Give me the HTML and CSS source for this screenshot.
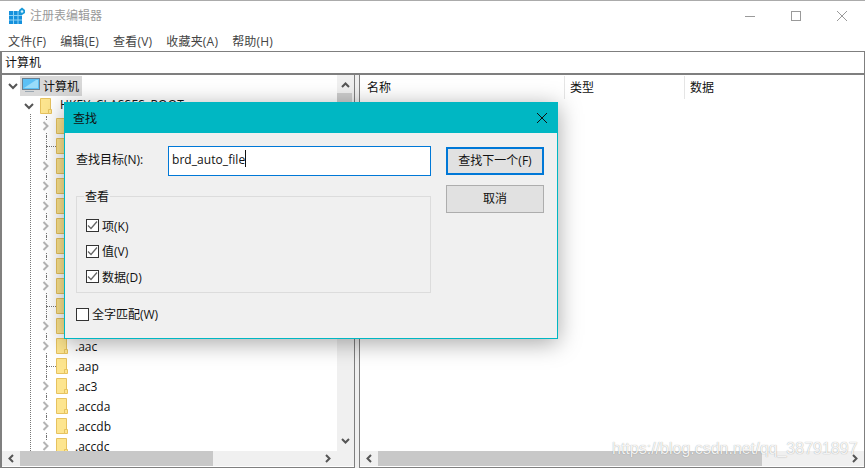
FILE: index.html
```html
<!DOCTYPE html>
<html>
<head>
    <meta charset="utf-8">
    <title>注册表编辑器</title>
    <link rel="stylesheet" href="styles.css">
</head>

<body>
    <svg class="defs" width="0" height="0">
        <symbol id="folder" viewBox="0 0 12 16">
            <path d="M0.500 0.500h10v15h-10z" fill="#fde58f" stroke="#e6c25f"/>
            <path d="M8.500 15.500v-4h3v4z" fill="#fde58f" stroke="#e6c25f"/>
        </symbol>
        <symbol id="chevRight" viewBox="0 0 12 12">
            <rect width="12" height="12" fill="#fff"/>
            <path d="M3.500 2l4 4-4 4" fill="none" stroke="#b4b4b4" stroke-width="2"/>
        </symbol>
        <symbol id="chevDown" viewBox="0 0 12 12">
            <rect width="12" height="12" fill="#fff"/>
            <path d="M2 4l4 4 4-4" fill="none" stroke="#555" stroke-width="2"/>
        </symbol>
        <symbol id="tick" viewBox="0 0 11 11">
            <path d="M1 5.500l3 3 6-7" fill="none" stroke="#666" stroke-width="1.300"/>
        </symbol>
    </svg>

    <div class="window">
        <div class="titlebar">
            <svg class="appIcon" width="18" height="18" viewBox="0 0 18 18">
                <rect x="1" y="4" width="13" height="13" fill="#1590dc"/>
                <path d="M5.500 4v13M10 4v13M1 8.500h13M1 13h13" stroke="#8fd3f5" stroke-width="1"/>
                <path d="M14 0.500l3 2.500v3l-3 2-3-2v-3z" fill="#1a9ad9"/>
                <circle cx="14" cy="4.500" r="1.300" fill="#d8f1fc"/>
            </svg>
            <span class="titleText">注册表编辑器</span>
            <div class="winButtons">
                <svg width="12" height="12" viewBox="0 0 12 12"><path d="M1 6.500h10" stroke="#9a9a9a"/></svg>
                <svg width="12" height="12" viewBox="0 0 12 12"><rect x="1.500" y="1.500" width="9" height="9" fill="none" stroke="#9a9a9a"/></svg>
                <svg width="12" height="12" viewBox="0 0 12 12"><path d="M1 1l10 10M11 1L1 11" stroke="#9a9a9a"/></svg>
            </div>
        </div>

        <div class="menubar">
            <span>文件(F)</span>
            <span>编辑(E)</span>
            <span>查看(V)</span>
            <span>收藏夹(A)</span>
            <span>帮助(H)</span>
        </div>

        <div class="address">计算机</div>

        <div class="panes">
            <div class="pane treePane">
                <div class="paneBody">
                    <div class="tree">
                        <div class="treeLine"></div>
                        <div class="row computerRow">
                            <svg class="chev" width="12" height="12"><use href="#chevDown"/></svg>
                            <span class="computerSel">
                                <svg width="18" height="16" viewBox="0 0 18 16">
                                    <rect x="0.500" y="0.500" width="17" height="11" fill="#5cc0f5" stroke="#6b7f90"/>
                                    <path d="M2 10L14 2h2v8z" fill="#9adcfa"/>
                                    <path d="M6 13h6v1H3v-1z" fill="#9aa7b2"/>
                                </svg>
                                计算机
                            </span>
                        </div>
                        <div class="row hiveRow">
                            <svg class="chev" width="12" height="12"><use href="#chevDown"/></svg>
                            <svg class="folder" width="12" height="16"><use href="#folder"/></svg>
                            <span class="hiveName">HKEY_CLASSES_ROOT</span>
                        </div>
                        <div class="row keyRow"><svg class="chev" width="12" height="12"><use href="#chevRight"/></svg><svg class="folder" width="12" height="16"><use href="#folder"/></svg></div>
                        <div class="row keyRow"><span class="dots"></span><svg class="folder" width="12" height="16"><use href="#folder"/></svg></div>
                        <div class="row keyRow"><svg class="chev" width="12" height="12"><use href="#chevRight"/></svg><svg class="folder" width="12" height="16"><use href="#folder"/></svg></div>
                        <div class="row keyRow"><svg class="chev" width="12" height="12"><use href="#chevRight"/></svg><svg class="folder" width="12" height="16"><use href="#folder"/></svg></div>
                        <div class="row keyRow"><svg class="chev" width="12" height="12"><use href="#chevRight"/></svg><svg class="folder" width="12" height="16"><use href="#folder"/></svg></div>
                        <div class="row keyRow"><svg class="chev" width="12" height="12"><use href="#chevRight"/></svg><svg class="folder" width="12" height="16"><use href="#folder"/></svg></div>
                        <div class="row keyRow"><svg class="chev" width="12" height="12"><use href="#chevRight"/></svg><svg class="folder" width="12" height="16"><use href="#folder"/></svg></div>
                        <div class="row keyRow"><svg class="chev" width="12" height="12"><use href="#chevRight"/></svg><svg class="folder" width="12" height="16"><use href="#folder"/></svg></div>
                        <div class="row keyRow"><svg class="chev" width="12" height="12"><use href="#chevRight"/></svg><svg class="folder" width="12" height="16"><use href="#folder"/></svg></div>
                        <div class="row keyRow"><span class="dots"></span><svg class="folder" width="12" height="16"><use href="#folder"/></svg></div>
                        <div class="row keyRow"><svg class="chev" width="12" height="12"><use href="#chevRight"/></svg><svg class="folder" width="12" height="16"><use href="#folder"/></svg></div>
                        <div class="row keyRow"><svg class="chev" width="12" height="12"><use href="#chevRight"/></svg><svg class="folder" width="12" height="16"><use href="#folder"/></svg><span>.aac</span></div>
                        <div class="row keyRow"><span class="dots"></span><svg class="folder" width="12" height="16"><use href="#folder"/></svg><span>.aap</span></div>
                        <div class="row keyRow"><svg class="chev" width="12" height="12"><use href="#chevRight"/></svg><svg class="folder" width="12" height="16"><use href="#folder"/></svg><span>.ac3</span></div>
                        <div class="row keyRow"><svg class="chev" width="12" height="12"><use href="#chevRight"/></svg><svg class="folder" width="12" height="16"><use href="#folder"/></svg><span>.accda</span></div>
                        <div class="row keyRow"><svg class="chev" width="12" height="12"><use href="#chevRight"/></svg><svg class="folder" width="12" height="16"><use href="#folder"/></svg><span>.accdb</span></div>
                        <div class="row keyRow"><svg class="chev" width="12" height="12"><use href="#chevRight"/></svg><svg class="folder" width="12" height="16"><use href="#folder"/></svg><span>.accdc</span></div>
                    </div>
                    <div class="vScroll">
                        <svg width="9" height="6" viewBox="0 0 9 6"><path d="M1 5l3.500-3.500L8 5" fill="none" stroke="#555" stroke-width="2"/></svg>
                        <div class="vThumb"></div>
                        <svg width="9" height="6" viewBox="0 0 9 6"><path d="M1 1l3.500 3.500L8 1" fill="none" stroke="#555" stroke-width="2"/></svg>
                    </div>
                </div>
                <div class="hScroll treeScroll">
                    <svg width="6" height="9" viewBox="0 0 6 9"><path d="M5 1L1.500 4.500 5 8" fill="none" stroke="#555" stroke-width="2"/></svg>
                    <div class="hThumb treeThumb"></div>
                    <svg width="6" height="9" viewBox="0 0 6 9"><path d="M1 1l3.500 3.500L1 8" fill="none" stroke="#555" stroke-width="2"/></svg>
                </div>
            </div>

            <div class="pane listPane">
                <div class="listHead">
                    <span class="colName">名称</span>
                    <span class="colType">类型</span>
                    <span class="colData">数据</span>
                </div>
                <div class="listBody"></div>
                <div class="hScroll listScroll">
                    <svg width="6" height="9" viewBox="0 0 6 9"><path d="M5 1L1.500 4.500 5 8" fill="none" stroke="#555" stroke-width="2"/></svg>
                    <div class="hThumb listThumb"></div>
                    <svg width="6" height="9" viewBox="0 0 6 9"><path d="M1 1l3.500 3.500L1 8" fill="none" stroke="#555" stroke-width="2"/></svg>
                </div>
            </div>
        </div>
    </div>

    <div class="dialog">
        <div class="dlgTitle">
            <span>查找</span>
            <svg width="12" height="12" viewBox="0 0 12 12"><path d="M1 1l10 10M11 1L1 11" stroke="#111"/></svg>
        </div>
        <div class="dlgBody">
            <div class="dlgMain">
                <div class="findRow">
                    <label>查找目标(N):</label>
                    <div class="findInput"><span class="findText">brd_auto_file</span><span class="caret"></span></div>
                </div>
                <fieldset class="lookIn">
                    <legend>查看</legend>
                    <div class="check"><span class="box"><svg width="11" height="11"><use href="#tick"/></svg></span>项(K)</div>
                    <div class="check"><span class="box"><svg width="11" height="11"><use href="#tick"/></svg></span>值(V)</div>
                    <div class="check"><span class="box"><svg width="11" height="11"><use href="#tick"/></svg></span>数据(D)</div>
                </fieldset>
                <div class="check wholeWord"><span class="box"></span>全字匹配(W)</div>
            </div>
            <div class="dlgButtons">
                <button class="btn primary">查找下一个(F)</button>
                <button class="btn">取消</button>
            </div>
        </div>
    </div>

    <div class="watermark">https://blog.csdn.net/qq_38791897</div>
</body>
</html>
```

FILE: styles.css
```css
* {
    box-sizing: border-box;
}

html, body {
    margin: 0;
    height: 100%;
    overflow: hidden;
}

body {
    background: #fff;
    font-family: "Open Sans", "Noto Sans CJK SC", sans-serif;
    font-size: 12px;
    color: #111;
}

.defs {
    position: absolute;
}

.window {
    height: 468px;
    display: flex;
    flex-direction: column;
    border-top: 1px solid #ababab;
}

.titlebar {
    height: 29px;
    display: flex;
    align-items: center;
    padding-left: 8px;
}

.appIcon {
    margin-right: 4px;
}

.titleText {
    color: #9a9a9a;
    margin-bottom: 2px;
}

.winButtons {
    margin-left: auto;
    display: flex;
    gap: 34px;
    padding-right: 17px;
}

.menubar {
    height: 21px;
    display: flex;
    align-items: center;
    gap: 14px;
    padding-left: 8px;
    color: #444;
    letter-spacing: 0.2px;
}

.address {
    height: 24px;
    border: solid #7f7f7f;
    border-width: 1px 1px 2px 2px;
    padding-left: 3px;
    line-height: 22px;
    background: #fff;
}

.panes {
    flex: 1;
    display: flex;
    gap: 4px;
    min-height: 0;
    background: #f0f0f0;
}

.pane {
    background: #fff;
    display: flex;
    flex-direction: column;
    border: solid #7f7f7f;
    border-width: 0 1px 1px 1px;
}

.treePane {
    width: 355px;
    border-left-width: 2px;
}

.listPane {
    flex: 1;
}

.paneBody {
    flex: 1;
    min-height: 0;
    display: flex;
}

.tree {
    flex: 1;
    min-width: 0;
    overflow: hidden;
    padding-top: 1px;
    position: relative;
}

.treeLine {
    position: absolute;
    left: 28px;
    top: 39px;
    bottom: 0;
    border-left: 1px dotted #777;
}

.row {
    height: 20px;
    display: flex;
    align-items: center;
    white-space: nowrap;
    position: relative;
}

.chev {
    position: relative;
    flex: none;
}

.computerRow {
    padding-left: 5px;
}

.computerSel {
    margin-left: 1px;
    width: 62px;
    height: 20px;
    background: #d9d9d9;
    display: flex;
    align-items: center;
    gap: 3px;
    padding-left: 2px;
}

.hiveRow {
    padding-left: 21px;
}

.hiveRow .folder {
    margin: 0 8px 0 5px;
}

.hiveName {
    margin-bottom: 3px;
    letter-spacing: 0.2px;
}

.keyRow {
    padding-left: 38px;
}

.keyRow .folder {
    margin: 0 7px 0 4px;
    position: relative;
}

/* dotted branch running behind the expand arrows */
.keyRow::before {
    content: "";
    position: absolute;
    left: 44px;
    top: 0;
    bottom: 0;
    border-left: 1px dotted #777;
}

.dots {
    width: 12px;
    height: 1px;
    margin-left: 6px;
    margin-right: -6px;
    border-top: 1px dotted #777;
}

.vScroll {
    width: 17px;
    background: #f0f0f0;
    display: flex;
    flex-direction: column;
    align-items: center;
    justify-content: space-between;
    padding: 7px 0;
    flex: none;
}

.vThumb {
    width: 15px;
    height: 50px;
    background: #cdcdcd;
    margin-bottom: auto;
    margin-top: 5px;
    margin-right: 2px;
}

.hScroll {
    height: 16px;
    padding-bottom: 1px;
    background: #f0f0f0;
    display: flex;
    align-items: center;
    flex: none;
    box-shadow: inset 0 -1px 0 #fff;
}

.treeScroll {
    padding-left: 6px;
    padding-right: 23px;
}

.listScroll {
    padding-left: 6px;
    padding-right: 6px;
}

.hThumb {
    height: 15px;
    background: #c8c8c8;
    margin-right: auto;
    margin-left: 6px;
}

.treeThumb {
    width: 193px;
}

.listThumb {
    width: 384px;
}

.listHead {
    height: 24px;
    display: flex;
    padding-top: 1px;
}

.listHead span {
    height: 23px;
    line-height: 24px;
    padding-left: 5px;
    border-right: 1px solid #e5e5e5;
}

.listHead .colName {
    width: 205px;
    padding-left: 7px;
}

.colType {
    width: 120px;
}

.listHead .colData {
    width: 120px;
    border-right: 0;
}

.listBody {
    flex: 1;
}

/* find dialog sits on top of the main window */
.dialog {
    position: absolute;
    left: 64px;
    top: 102px;
    width: 494px;
    height: 237px;
    background: #f0f0f0;
    border: 1px solid #00b7c3;
    box-shadow: 0 4px 22px rgba(0, 0, 0, 0.35);
}

.dlgTitle {
    height: 30px;
    background: #00b7c3;
    display: flex;
    align-items: center;
    justify-content: space-between;
    padding: 0 9px 0 8px;
}

.dlgBody {
    display: flex;
    padding: 13px 13px 0 11px;
}

.dlgMain {
    width: 355px;
}

.findRow {
    display: flex;
    align-items: center;
}

.findRow label {
    width: 92px;
    margin-bottom: 4px;
}

.findInput {
    width: 263px;
    height: 30px;
    background: #fff;
    border: 1px solid #0078d7;
    padding-left: 3px;
    display: flex;
    align-items: center;
}

.findText {
    margin-bottom: 4px;
    letter-spacing: 0.06px;
}

.caret {
    width: 1px;
    height: 17px;
    margin-bottom: 6px;
    background: #111;
}

.lookIn {
    margin: 11px 0 0;
    padding: 8px 0 0 9px;
    height: 106px;
    border: 1px solid #dcdcdc;
}

.lookIn legend {
    padding: 0 1px;
    margin-left: -2px;
}

.lookIn .check {
    height: 25.5px;
}

.check {
    display: flex;
    align-items: center;
    gap: 3px;
}

.box {
    width: 13px;
    height: 13px;
    border: 1px solid #333;
    background: #fff;
    display: flex;
    align-items: center;
    justify-content: center;
}

.wholeWord {
    margin-top: 12px;
}

.dlgButtons {
    margin-left: 15px;
    padding-top: 1px;
    display: flex;
    flex-direction: column;
    gap: 10px;
}

.btn {
    width: 98px;
    height: 28px;
    background: #e1e1e1;
    border: 1px solid #adadad;
    font: inherit;
    color: #111;
    padding: 0 0 2px;
}

.primary {
    border: 2px solid #0078d7;
}

.watermark {
    position: absolute;
    left: 612px;
    top: 440px;
    font-family: "Liberation Sans", sans-serif;
    font-size: 16px;
    color: rgba(255, 255, 255, 0.9);
    text-shadow: 0 0 1px rgba(0, 0, 0, 0.4);
    white-space: nowrap;
}
```
